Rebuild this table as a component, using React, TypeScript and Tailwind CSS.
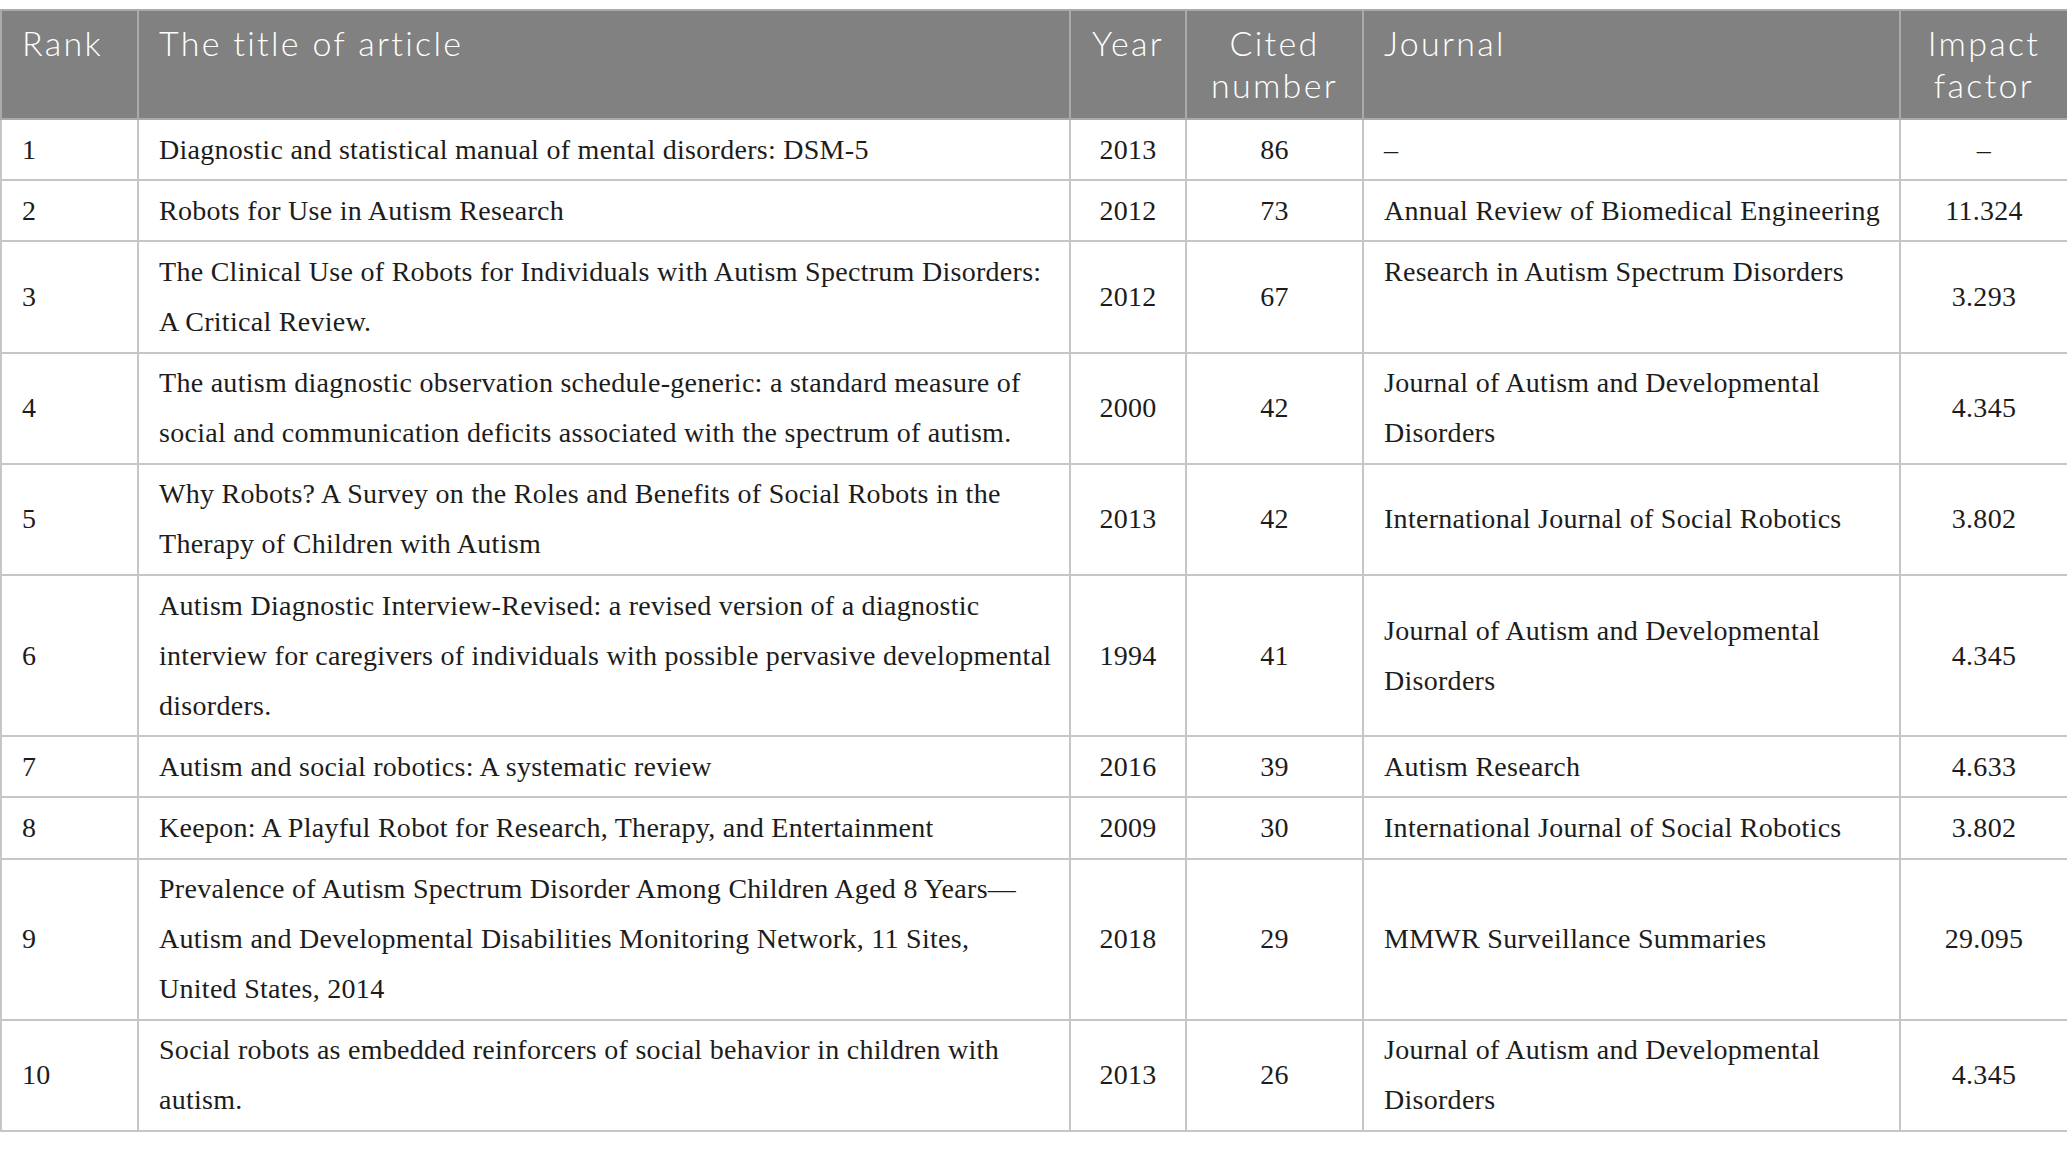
import { Fragment } from "react"

type Row = {
  rank: number
  title: string[]
  year: string
  cited: string
  journal: string[]
  impact: string
  journalTop?: boolean
}

const rows: Row[] = [
  { rank: 1, title: ["Diagnostic and statistical manual of mental disorders: DSM-5"], year: "2013", cited: "86", journal: ["–"], impact: "–" },
  { rank: 2, title: ["Robots for Use in Autism Research"], year: "2012", cited: "73", journal: ["Annual Review of Biomedical Engineering"], impact: "11.324" },
  {
    rank: 3,
    title: ["The Clinical Use of Robots for Individuals with Autism Spectrum Disorders:", "A Critical Review."],
    year: "2012",
    cited: "67",
    journal: ["Research in Autism Spectrum Disorders"],
    impact: "3.293",
    journalTop: true,
  },
  {
    rank: 4,
    title: [
      "The autism diagnostic observation schedule-generic: a standard measure of",
      "social and communication deficits associated with the spectrum of autism.",
    ],
    year: "2000",
    cited: "42",
    journal: ["Journal of Autism and Developmental", "Disorders"],
    impact: "4.345",
  },
  {
    rank: 5,
    title: ["Why Robots? A Survey on the Roles and Benefits of Social Robots in the", "Therapy of Children with Autism"],
    year: "2013",
    cited: "42",
    journal: ["International Journal of Social Robotics"],
    impact: "3.802",
  },
  {
    rank: 6,
    title: [
      "Autism Diagnostic Interview-Revised: a revised version of a diagnostic",
      "interview for caregivers of individuals with possible pervasive developmental",
      "disorders.",
    ],
    year: "1994",
    cited: "41",
    journal: ["Journal of Autism and Developmental", "Disorders"],
    impact: "4.345",
  },
  { rank: 7, title: ["Autism and social robotics: A systematic review"], year: "2016", cited: "39", journal: ["Autism Research"], impact: "4.633" },
  {
    rank: 8,
    title: ["Keepon: A Playful Robot for Research, Therapy, and Entertainment"],
    year: "2009",
    cited: "30",
    journal: ["International Journal of Social Robotics"],
    impact: "3.802",
  },
  {
    rank: 9,
    title: [
      "Prevalence of Autism Spectrum Disorder Among Children Aged 8 Years—",
      "Autism and Developmental Disabilities Monitoring Network, 11 Sites,",
      "United States, 2014",
    ],
    year: "2018",
    cited: "29",
    journal: ["MMWR Surveillance Summaries"],
    impact: "29.095",
  },
  {
    rank: 10,
    title: ["Social robots as embedded reinforcers of social behavior in children with", "autism."],
    year: "2013",
    cited: "26",
    journal: ["Journal of Autism and Developmental", "Disorders"],
    impact: "4.345",
  },
]

function Lines({ lines }: { lines: string[] }) {
  return (
    <>
      {lines.map((l, i) => (
        <Fragment key={i}>
          {i > 0 && <br />}
          {l}
        </Fragment>
      ))}
    </>
  )
}

export default function App() {
  const th = "border-2 border-[#a9aaa9] px-[20px] pt-[11px] pb-[12px] align-top font-light leading-[42px]"
  const td = "border-2 border-[#c6c6c6] px-[20px] py-[4.6px] leading-[50px] align-middle"

  return (
    <div className="w-[2067px] min-h-[1151px] bg-white pt-[9px]">
      <table className="w-full table-fixed border-collapse">
        <colgroup>
          <col className="w-[137px]" />
          <col className="w-[932px]" />
          <col className="w-[116px]" />
          <col className="w-[177px]" />
          <col className="w-[537px]" />
          <col className="w-[168px]" />
        </colgroup>
        <thead>
          <tr
            className="bg-[#808180] text-white text-[34px] tracking-[2.3px]"
            style={{ fontFamily: "Lato, 'Open Sans', sans-serif" }}
          >
            <th className={th + " text-left"}>Rank</th>
            <th className={th + " text-left"}>The title of article</th>
            <th className={th + " text-center px-[2px]"}>Year</th>
            <th className={th + " text-center px-[2px]"}>
              Cited
              <br />
              number
            </th>
            <th className={th + " text-left"}>Journal</th>
            <th className={th + " text-center px-[2px]"}>
              Impact
              <br />
              factor
            </th>
          </tr>
        </thead>
        <tbody
          className="text-[28px] tracking-[0.28px] text-[#1c1c1c]"
          style={{ fontFamily: "'Liberation Serif', 'DejaVu Serif', serif" }}
        >
          {rows.map((r) => (
            <tr key={r.rank}>
              <td className={td}>{r.rank}</td>
              <td className={td + " whitespace-nowrap"}>
                <Lines lines={r.title} />
              </td>
              <td className={td + " text-center"}>{r.year}</td>
              <td className={td + " text-center"}>{r.cited}</td>
              <td className={td + " whitespace-nowrap " + (r.journalTop ? "!align-top" : "")}>
                <Lines lines={r.journal} />
              </td>
              <td className={td + " text-center"}>{r.impact}</td>
            </tr>
          ))}
        </tbody>
      </table>
    </div>
  )
}
